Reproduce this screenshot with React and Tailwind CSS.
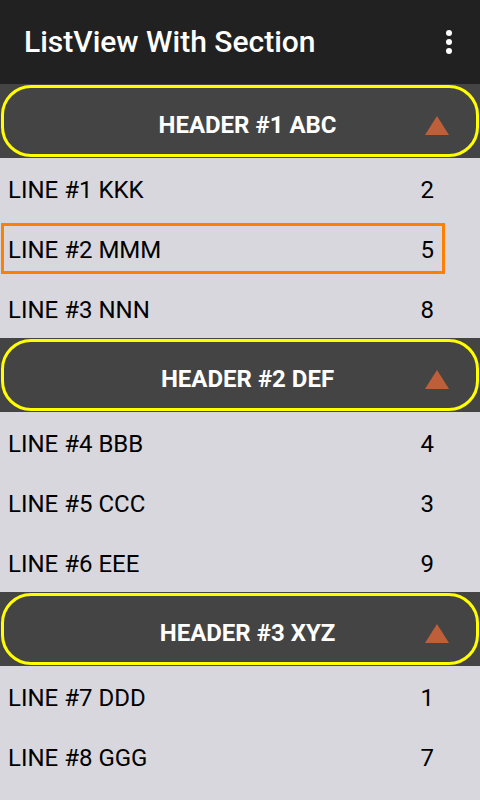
const sections = [
  {
    title: "HEADER #1 ABC",
    lines: [
      { label: "LINE #1 KKK", value: 2 },
      { label: "LINE #2 MMM", value: 5, selected: true },
      { label: "LINE #3 NNN", value: 8 },
    ],
  },
  {
    title: "HEADER #2 DEF",
    lines: [
      { label: "LINE #4 BBB", value: 4 },
      { label: "LINE #5 CCC", value: 3 },
      { label: "LINE #6 EEE", value: 9 },
    ],
  },
  {
    title: "HEADER #3 XYZ",
    lines: [
      { label: "LINE #7 DDD", value: 1 },
      { label: "LINE #8 GGG", value: 7 },
    ],
  },
];

const SectionHeader = ({ title }) => {
  return (
    <div className="h-[74px] bg-[#444444] py-px">
      <div className="h-full mx-px rounded-[30px] border-[3px] border-[#ffff00] flex items-center pt-[8px]">
        <span className="flex-1 text-center pl-[66px] text-white text-[24px] font-bold">
          {title}
        </span>
        <svg width="24" height="19" viewBox="0 0 24 19" className="mr-[27px]">
          <polygon points="12,0 24,19 0,19" fill="#bf5f39" />
        </svg>
      </div>
    </div>
  );
};

const LineItem = ({ label, value, selected }) => {
  return (
    <div className="h-[60px] flex items-center">
      <div
        className={`w-[444px] h-[51px] ml-px border-[3px] flex items-center justify-between pl-[4px] pr-[8px] pt-[3px] ${
          selected ? "border-[#ff8000]" : "border-transparent"
        }`}
      >
        <span className="text-[24px] text-black">{label}</span>
        <span className="text-[24px] text-black">{value}</span>
      </div>
    </div>
  );
};

export default function App() {
  return (
    <div className="w-[480px] h-[800px] overflow-hidden bg-[#d8d7dd] font-['Roboto',sans-serif]">
      <div className="h-[84px] bg-[#212121] flex items-center justify-between pl-[24px] pr-[28px]">
        <h1 className="text-white text-[30px] font-medium pb-px">ListView With Section</h1>
        <div className="flex flex-col gap-[3px]">
          <span className="w-[6px] h-[6px] rounded-full bg-white" />
          <span className="w-[6px] h-[6px] rounded-full bg-white" />
          <span className="w-[6px] h-[6px] rounded-full bg-white" />
        </div>
      </div>
      {sections.map((s) => (
        <div key={s.title}>
          <SectionHeader title={s.title} />
          {s.lines.map((l) => (
            <LineItem key={l.label} {...l} />
          ))}
        </div>
      ))}
    </div>
  );
}
